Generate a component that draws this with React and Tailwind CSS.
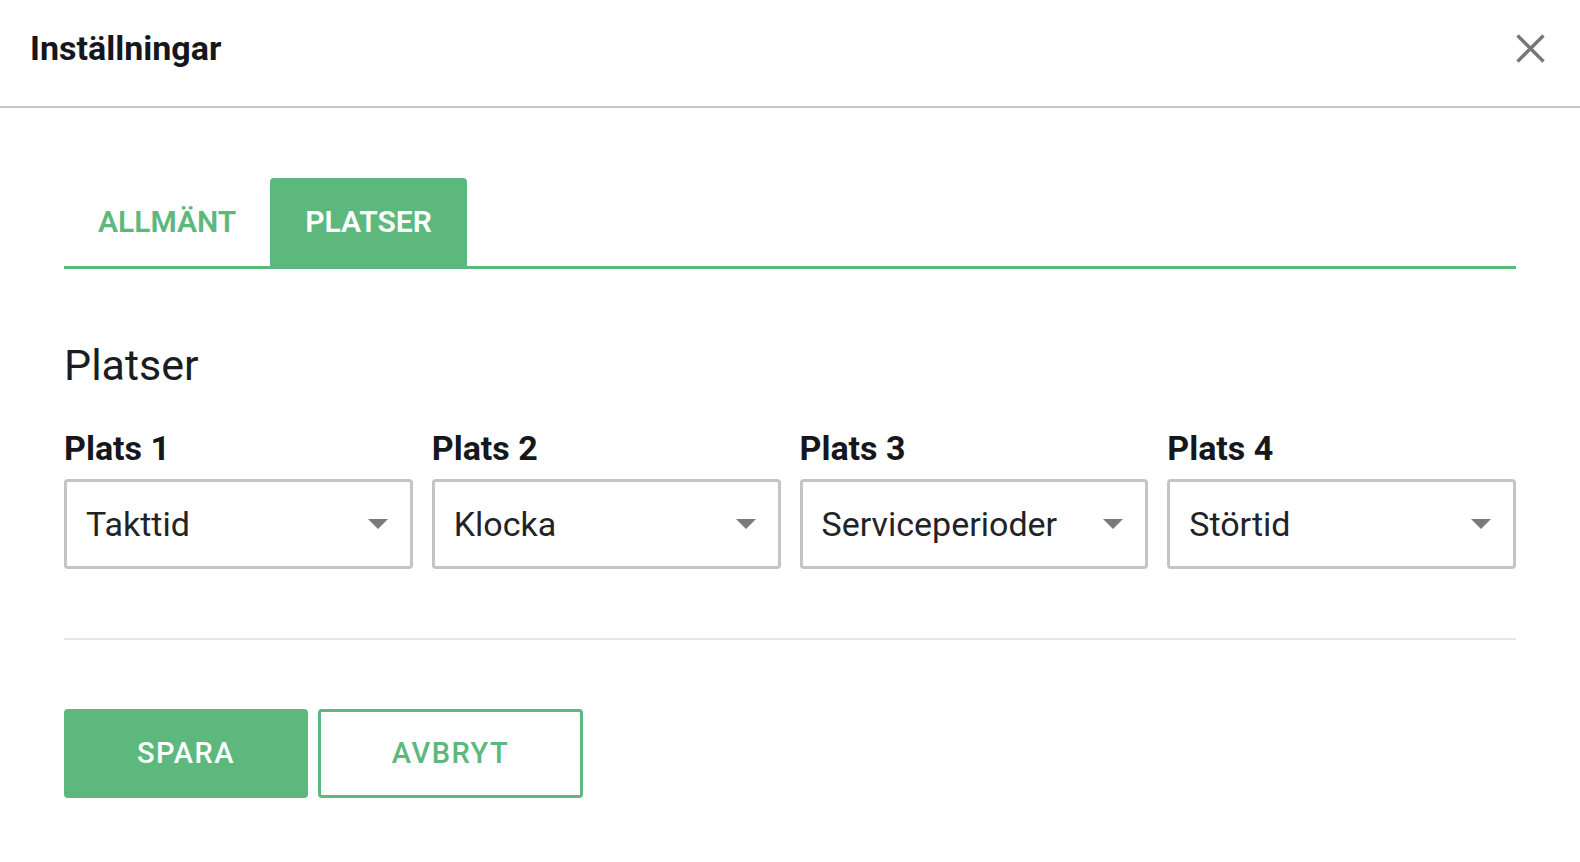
import React from "react";

function Select({ value }) {
  return (
    <div className="h-[90px] border-[3px] border-[#c4c4c4] rounded-[4px] flex items-center justify-between pl-[19px] pr-[22px] bg-white">
      <span className="text-[34px] text-[#222326] leading-none">{value}</span>
      <svg width="20" height="10" viewBox="0 0 20 10">
        <path d="M0 0 L20 0 L10 10 Z" fill="#7a7a7a" />
      </svg>
    </div>
  );
}

export default function App() {
  const fields = [
    ["Plats 1", "Takttid"],
    ["Plats 2", "Klocka"],
    ["Plats 3", "Serviceperioder"],
    ["Plats 4", "Störtid"],
  ];
  return (
    <div className="w-[1580px] h-[862px] bg-white font-['Roboto',sans-serif] overflow-hidden">
      <div className="h-[108px] flex items-center justify-between pl-[30px] pr-[35px] pb-[10px] border-b-2 border-[#c6c6c6]">
        <h1 className="text-[34px] font-bold text-[#16171d] leading-none">Inställningar</h1>
        <svg width="29" height="29" viewBox="0 0 29 29">
          <path d="M1.5 1.5 L27.5 27.5 M27.5 1.5 L1.5 27.5" stroke="#777777" strokeWidth="3.4" />
        </svg>
      </div>
      <div className="px-16">
        <div className="mt-[70px] flex border-b-[3px] border-[#5cb87c]">
          <div className="h-[88px] px-[34px] flex items-center text-[30px] font-semibold text-[#5cb87c] leading-none">
            ALLMÄNT
          </div>
          <div className="h-[88px] px-[35px] flex items-center text-[30px] font-semibold text-white bg-[#5cb87c] rounded-t-[4px] leading-none">
            PLATSER
          </div>
        </div>
        <h2 className="mt-[71px] text-[43px] text-[#1c1d22] leading-[50px]">Platser</h2>
        <div className="mt-[38px] grid grid-cols-4 gap-x-[19px]">
          {fields.map(([label, value]) => (
            <div key={label} className="flex flex-col">
              <div className="text-[34px] font-bold text-[#16171d] leading-[40px]">{label}</div>
              <div className="mt-[11px]">
                <Select value={value} />
              </div>
            </div>
          ))}
        </div>
        <div className="mt-[69px] h-[2px] bg-[#e6e6e6]" />
        <div className="mt-[69px] flex gap-[10px]">
          <button className="w-[244px] h-[89px] bg-[#5cb87c] rounded-[4px] text-white text-[29px] font-medium tracking-[1.5px]">
            SPARA
          </button>
          <button className="w-[265px] h-[89px] bg-white border-[3px] border-[#5cb87c] rounded-[4px] text-[#5cb87c] text-[29px] font-medium tracking-[1.5px]">
            AVBRYT
          </button>
        </div>
      </div>
    </div>
  );
}
